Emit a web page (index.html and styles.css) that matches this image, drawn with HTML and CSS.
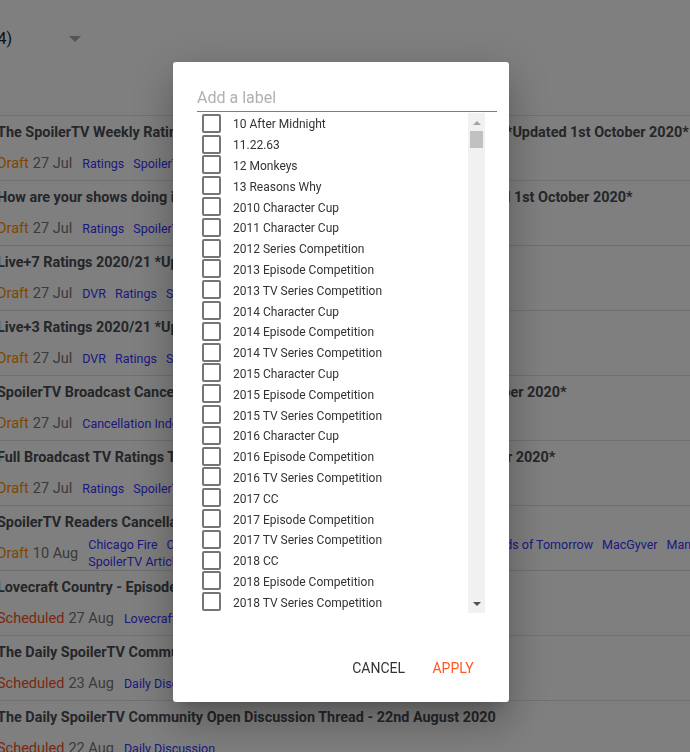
FILE: index.html
```html
<!DOCTYPE html>
<html>
<head>
<meta charset="utf-8">
<link rel="stylesheet" href="styles.css">
</head>
<body>
<div class="page">
  <div class="toolbar">
    <span class="count">(4)</span>
    <span class="caret"></span>
  </div>
  <ul class="posts">
    <li class="post">
      <div class="title">The SpoilerTV Weekly Ratings Charts - 2020/21 Season - Broadcast Networks *Updated 1st October 2020*</div>
      <div class="meta"><span class="status draft">Draft</span><span class="date">27 Jul</span>
        <div class="tags"><a>Ratings</a><a>SpoilerTV Articles</a></div></div>
    </li>
    <li class="post">
      <div class="title">How are your shows doing in the Broadcast Ratings? 2020/21 Season *Updated 1st October 2020*</div>
      <div class="meta"><span class="status draft">Draft</span><span class="date">27 Jul</span>
        <div class="tags"><a>Ratings</a><a>SpoilerTV Articles</a></div></div>
    </li>
    <li class="post">
      <div class="title">Live+7 Ratings 2020/21 *Updated 1st October 2020*</div>
      <div class="meta"><span class="status draft">Draft</span><span class="date">27 Jul</span>
        <div class="tags"><a>DVR</a><a>Ratings</a><a>SpoilerTV Articles</a></div></div>
    </li>
    <li class="post">
      <div class="title">Live+3 Ratings 2020/21 *Updated 1st October 2020*</div>
      <div class="meta"><span class="status draft">Draft</span><span class="date">27 Jul</span>
        <div class="tags"><a>DVR</a><a>Ratings</a><a>SpoilerTV Articles</a></div></div>
    </li>
    <li class="post">
      <div class="title">SpoilerTV Broadcast Cancellation Index 2020/21 Seasons - *Updated 1st October 2020*</div>
      <div class="meta"><span class="status draft">Draft</span><span class="date">27 Jul</span>
        <div class="tags"><a>Cancellation Index</a><a>SpoilerTV Articles</a></div></div>
    </li>
    <li class="post">
      <div class="title">Full Broadcast TV Ratings Table 2020/21 Season - Top 20 *Updated 1st October 2020*</div>
      <div class="meta"><span class="status draft">Draft</span><span class="date">27 Jul</span>
        <div class="tags"><a>Ratings</a><a>SpoilerTV Articles</a></div></div>
    </li>
    <li class="post">
      <div class="title">SpoilerTV Readers Cancellation Poll 2020</div>
      <div class="meta"><span class="status draft">Draft</span><span class="date">10 Aug</span>
        <div class="tags"><a>Chicago Fire</a><a>Chicago Med</a><a>Chicago P.D.</a><a>Arrow</a><a>Blue Bloods</a><a>DC's Legends of Tomorrow</a><a>MacGyver</a><a>Manifest</a><span class="break"></span><a>SpoilerTV Articles</a><a>Polls</a></div></div>
    </li>
    <li class="post">
      <div class="title">Lovecraft Country - Episode 1.02 - Whitey's on the Moon - Press Release</div>
      <div class="meta"><span class="status sched">Scheduled</span><span class="date">27 Aug</span>
        <div class="tags"><a>Lovecraft Country</a></div></div>
    </li>
    <li class="post">
      <div class="title">The Daily SpoilerTV Community Open Discussion Thread - 23rd August 2020</div>
      <div class="meta"><span class="status sched">Scheduled</span><span class="date">23 Aug</span>
        <div class="tags"><a>Daily Discussion</a></div></div>
    </li>
    <li class="post">
      <div class="title">The Daily SpoilerTV Community Open Discussion Thread - 22nd August 2020</div>
      <div class="meta"><span class="status sched">Scheduled</span><span class="date">22 Aug</span>
        <div class="tags"><a>Daily Discussion</a></div></div>
    </li>
  </ul>
</div>

<div class="overlay">
  <div class="dialog">
    <input class="label-input" type="text" placeholder="Add a label">
    <div class="list">
      <ul class="items">
        <li class="item"><span class="box"></span><span class="name">10 After Midnight</span></li>
        <li class="item"><span class="box"></span><span class="name">11.22.63</span></li>
        <li class="item"><span class="box"></span><span class="name">12 Monkeys</span></li>
        <li class="item"><span class="box"></span><span class="name">13 Reasons Why</span></li>
        <li class="item"><span class="box"></span><span class="name">2010 Character Cup</span></li>
        <li class="item"><span class="box"></span><span class="name">2011 Character Cup</span></li>
        <li class="item"><span class="box"></span><span class="name">2012 Series Competition</span></li>
        <li class="item"><span class="box"></span><span class="name">2013 Episode Competition</span></li>
        <li class="item"><span class="box"></span><span class="name">2013 TV Series Competition</span></li>
        <li class="item"><span class="box"></span><span class="name">2014 Character Cup</span></li>
        <li class="item"><span class="box"></span><span class="name">2014 Episode Competition</span></li>
        <li class="item"><span class="box"></span><span class="name">2014 TV Series Competition</span></li>
        <li class="item"><span class="box"></span><span class="name">2015 Character Cup</span></li>
        <li class="item"><span class="box"></span><span class="name">2015 Episode Competition</span></li>
        <li class="item"><span class="box"></span><span class="name">2015 TV Series Competition</span></li>
        <li class="item"><span class="box"></span><span class="name">2016 Character Cup</span></li>
        <li class="item"><span class="box"></span><span class="name">2016 Episode Competition</span></li>
        <li class="item"><span class="box"></span><span class="name">2016 TV Series Competition</span></li>
        <li class="item"><span class="box"></span><span class="name">2017 CC</span></li>
        <li class="item"><span class="box"></span><span class="name">2017 Episode Competition</span></li>
        <li class="item"><span class="box"></span><span class="name">2017 TV Series Competition</span></li>
        <li class="item"><span class="box"></span><span class="name">2018 CC</span></li>
        <li class="item"><span class="box"></span><span class="name">2018 Episode Competition</span></li>
        <li class="item"><span class="box"></span><span class="name">2018 TV Series Competition</span></li>
        <li class="item"><span class="box"></span><span class="name">2019 CC</span></li>
        <li class="item"><span class="box"></span><span class="name">2019 Episode Competition</span></li>
      </ul>
      <div class="sbar">
        <span class="arrow up"></span>
        <span class="thumb"></span>
        <span class="track"></span>
        <span class="arrow down"></span>
      </div>
    </div>
    <div class="actions">
      <button class="btn cancel">Cancel</button>
      <button class="btn apply">Apply</button>
    </div>
  </div>
</div>
</body>
</html>
```

FILE: styles.css
```css
html, body {
  margin: 0;
  padding: 0;
}
body {
  width: 690px;
  height: 752px;
  overflow: hidden;
  background: #ffffff;
  font-family: Roboto, "Noto Sans", sans-serif;
}
ul {
  margin: 0;
  padding: 0;
  list-style: none;
}

/* ---------- background page ---------- */
.page {
  margin-left: -3px;
  width: 900px;
}
.toolbar {
  box-sizing: border-box;
  height: 116px;
  padding-top: 29px;
  border-bottom: 1px solid #e0e0e0;
  display: flex;
  align-items: flex-start;
}
.count {
  margin-left: -5px;
  font-size: 16px;
  line-height: 20px;
  color: #222222;
}
.caret {
  margin-left: 57px;
  margin-top: 7px;
  width: 0;
  height: 0;
  border-left: 6px solid transparent;
  border-right: 6px solid transparent;
  border-top: 6px solid #a8a8a8;
}
.post {
  box-sizing: border-box;
  height: 65px;
  padding-top: 7px;
  border-bottom: 1px solid #e0e0e0;
}
.title {
  font-size: 14.4px;
  line-height: 20px;
  font-weight: 700;
  color: #4a4d52;
  white-space: nowrap;
}
.meta {
  margin-top: 3px;
  height: 34px;
  display: flex;
  align-items: center;
  font-size: 14.5px;
  white-space: nowrap;
}
.status.draft {
  color: #ff8c00;
}
.status.sched {
  color: #f4511e;
}
.date {
  margin-left: 4px;
  color: #757575;
}
.tags {
  margin-left: 10px;
  display: flex;
  flex-wrap: wrap;
  align-items: center;
  column-gap: 9px;
  font-size: 12.5px;
  line-height: 17px;
}
.tags a {
  color: #3a33ff;
}
.tags .break {
  flex-basis: 100%;
  height: 0;
}

/* ---------- overlay + dialog ---------- */
.overlay {
  position: fixed;
  inset: 0;
  background: rgba(0, 0, 0, 0.5);
  padding: 62px 0 0 173px;
}
.dialog {
  box-sizing: border-box;
  width: 336px;
  height: 640px;
  padding: 22px 24px 0;
  background: #ffffff;
  border-radius: 3px;
  box-shadow: 0 11px 15px -7px rgba(0, 0, 0, 0.2),
              0 24px 38px 3px rgba(0, 0, 0, 0.14),
              0 9px 46px 8px rgba(0, 0, 0, 0.12);
  display: flex;
  flex-direction: column;
}
.label-input {
  box-sizing: content-box;
  width: 300px;
  height: 27px;
  margin: 0;
  padding: 0;
  border: 0;
  border-bottom: 1px solid #f4511e;
  outline: none;
  font-family: Roboto, sans-serif;
  font-size: 16px;
  color: #333333;
  background: transparent;
}
.label-input::placeholder {
  color: #b0b0b0;
}
.list {
  margin-top: 1px;
  width: 288px;
  height: 500px;
  display: flex;
}
.items {
  flex: 1;
  overflow: hidden;
}
.item {
  height: 20.8px;
  display: flex;
  align-items: center;
}
.box {
  box-sizing: border-box;
  flex: none;
  width: 19px;
  height: 19px;
  margin-left: 5px;
  border: 2px solid #757575;
  border-radius: 2px;
}
.name {
  margin-left: 12px;
  margin-top: 2px;
  font-size: 12px;
  color: #333333;
  white-space: nowrap;
}
.sbar {
  width: 17px;
  background: #f1f1f1;
  display: flex;
  flex-direction: column;
  align-items: center;
}
.arrow {
  width: 0;
  height: 0;
  border-left: 4px solid transparent;
  border-right: 4px solid transparent;
}
.arrow.up {
  margin-top: 8px;
  border-bottom: 4px solid #a3a3a3;
}
.arrow.down {
  margin-bottom: 7px;
  border-top: 4px solid #505050;
}
.thumb {
  margin-top: 6px;
  width: 13px;
  height: 17px;
  background: #c1c1c1;
}
.track {
  flex: 1;
}
.actions {
  margin-top: 36px;
  display: flex;
  justify-content: flex-end;
  gap: 8px;
}
.btn {
  height: 37px;
  min-width: 64px;
  padding: 0 8px;
  border: 0;
  background: transparent;
  font-family: Roboto, sans-serif;
  font-size: 14px;
  font-weight: 400;
  text-transform: uppercase;
}
.btn.cancel {
  color: #333333;
}
.btn.apply {
  color: #ff5722;
}
```
